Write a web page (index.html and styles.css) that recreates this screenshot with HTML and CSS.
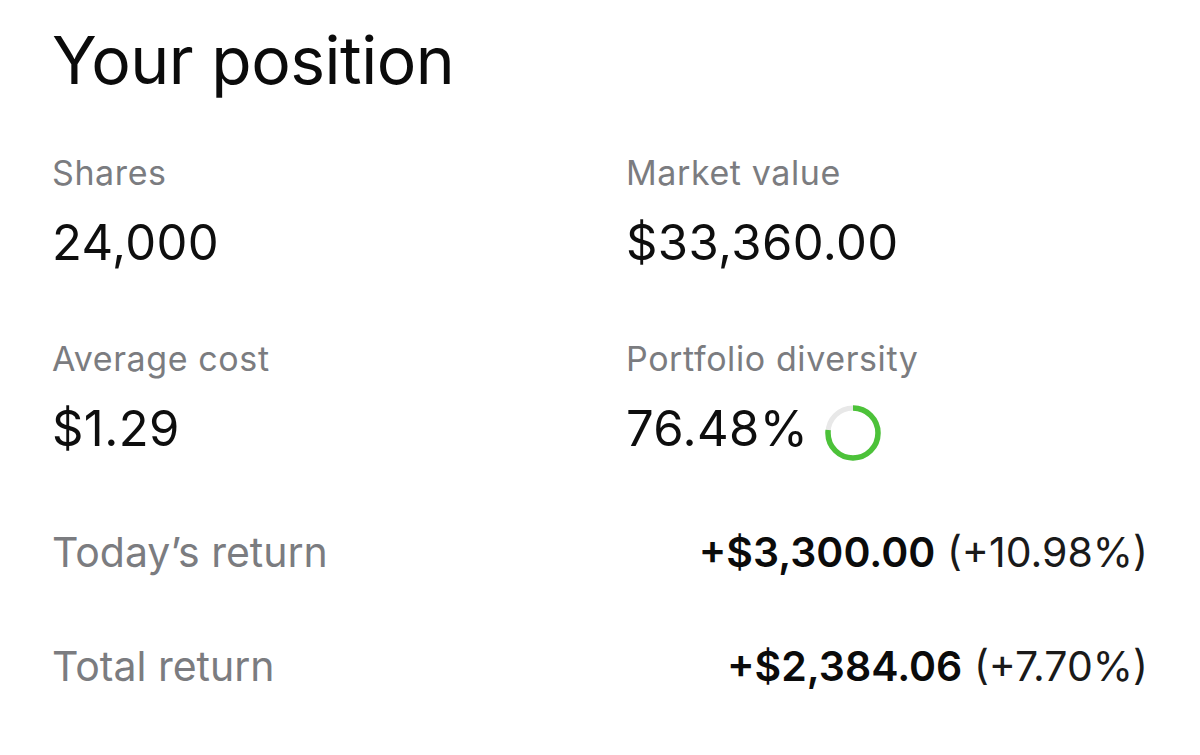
FILE: index.html
```html
<!DOCTYPE html>
<html>
<head>
<meta charset="utf-8">
<link rel="stylesheet" href="styles.css">
</head>
<body>
<main class="position">
  <h1 class="title">Your position</h1>
  <div class="stats">
    <div class="stat">
      <div class="label">Shares</div>
      <div class="value">24,000</div>
    </div>
    <div class="stat">
      <div class="label">Market value</div>
      <div class="value">$33,360.00</div>
    </div>
    <div class="stat">
      <div class="label">Average cost</div>
      <div class="value">$1.29</div>
    </div>
    <div class="stat">
      <div class="label">Portfolio diversity</div>
      <div class="value value-ring">76.48%
        <svg class="ring" viewBox="0 0 56 56" width="56" height="56" aria-hidden="true">
          <circle cx="28" cy="28" r="25" fill="none" stroke="#e8e8e8" stroke-width="5"/>
          <circle cx="28" cy="28" r="25" fill="none" stroke="#4cc239" stroke-width="5.5"
            stroke-dasharray="120.14 157.08" transform="rotate(-90 28 28)"/>
        </svg>
      </div>
    </div>
  </div>
  <div class="returns">
    <div class="return-row">
      <span class="return-label">Today’s return</span>
      <span class="return-value"><b>+$3,300.00</b> (+10.98%)</span>
    </div>
    <div class="return-row">
      <span class="return-label">Total return</span>
      <span class="return-value"><b>+$2,384.06</b> (+7.70%)</span>
    </div>
  </div>
</main>
</body>
</html>
```

FILE: styles.css
```css
html, body {
  margin: 0;
  padding: 0;
  background: #ffffff;
}

body {
  font-family: Inter, "Noto Sans", "Liberation Sans", sans-serif;
  color: #111111;
  width: 1200px;
  height: 755px;
  overflow: hidden;
}

.position {
  padding: 20px 52px 0 52px;
}

.title {
  margin: 0;
  font-size: 66px;
  font-weight: 400;
  line-height: 80px;
  letter-spacing: -0.5px;
  color: #0b0b0b;
}

.stats {
  display: grid;
  grid-template-columns: 574px 1fr;
  row-gap: 68px;
  margin-top: 53px;
}

.label {
  font-size: 34px;
  line-height: 40px;
  letter-spacing: 0.6px;
  color: #7b7c80;
}

.value {
  font-size: 49px;
  line-height: 56px;
  letter-spacing: 0.4px;
  margin-top: 22px;
  color: #0e0e0e;
}

.value-ring {
  display: flex;
  align-items: center;
  gap: 17px;
}

.ring {
  display: block;
  margin: 4px 0 -4px 0;
}

.returns {
  display: flex;
  flex-direction: column;
  gap: 68px;
  margin-top: 72px;
}

.return-row {
  display: flex;
  justify-content: space-between;
  align-items: baseline;
  font-size: 41px;
  line-height: 46px;
}

.return-label {
  color: #7b7c80;
}

.return-value {
  color: #1a1a1a;
}

.return-value b {
  font-weight: 600;
  color: #0b0b0b;
}
```
